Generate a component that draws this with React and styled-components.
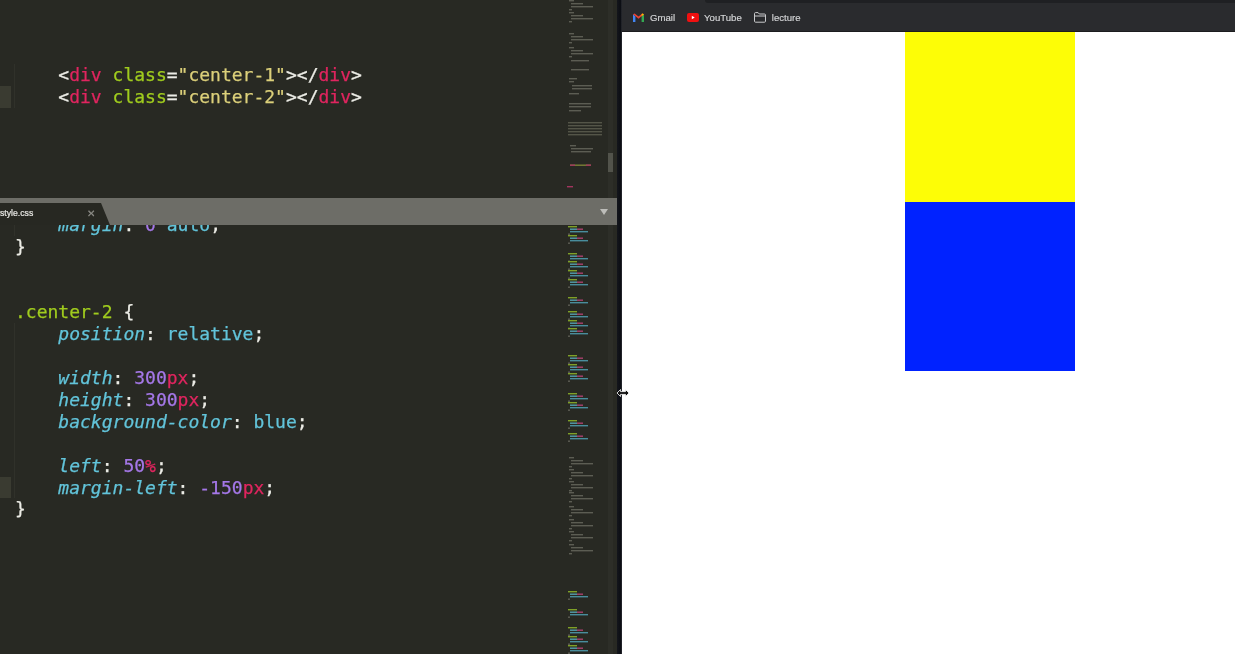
import styled, { createGlobalStyle } from "styled-components";

const GlobalStyle = createGlobalStyle`
  html, body {
    margin: 0;
    padding: 0;
    height: 100%;
    overflow: hidden;
    background: #272822;
  }
`;

const Screen = styled.div`
  position: relative;
  display: grid;
  grid-template-columns: 617px 5px 613px;
  width: 1235px;
  height: 654px;
  overflow: hidden;
  filter: blur(0.4px);
`;

const Editor = styled.div`
  display: flex;
  flex-direction: column;
  height: 654px;
  background: #282923;
`;

const Pane = styled.div`
  display: flex;
  height: ${(p) => p.$height}px;
  overflow: hidden;
`;

const Code = styled.div`
  flex: 1;
  min-width: 0;
  margin-top: ${(p) => p.$shift || 0}px;
  padding-top: ${(p) => p.$top || 0}px;
  font-family: "DejaVu Sans Mono", monospace;
  font-size: 18px;
  color: #ecece6;
  -webkit-text-stroke: 0.25px currentColor;
`;

const Line = styled.div`
  display: flex;
  height: 21.9px;
  line-height: 21.9px;
  white-space: pre;
`;

const Gutter = styled.div`
  width: 11px;
  margin-right: 3px;
  background: ${(p) => (p.$active ? "#3a3b31" : "transparent")};
`;

const LineText = styled.div`
  border-left: 1px solid ${(p) => (p.$guide ? "#30312a" : "transparent")};
`;

const Token = styled.span`
  color: ${(p) => p.$color};
  font-style: ${(p) => (p.$italic ? "italic" : "normal")};
`;

const MinimapSvg = styled.svg`
  flex: none;
  width: 43px;
  display: block;
  opacity: 0.85;
  filter: blur(0.5px);
`;

const ScrollTrack = styled.div`
  position: relative;
  flex: none;
  width: 5px;
  margin-right: 4px;
  background: #2d2e28;
`;

const ScrollThumb = styled.div`
  position: absolute;
  left: 0;
  right: 0;
  top: 153px;
  height: 19px;
  background: #52534b;
`;

const TabBar = styled.div`
  display: flex;
  align-items: flex-end;
  justify-content: space-between;
  height: 27px;
  background: #6d6d67;
`;

const Tab = styled.div`
  display: flex;
  align-items: center;
  justify-content: space-between;
  width: 110px;
  height: 22px;
  padding: 0 15px 2px 0;
  box-sizing: border-box;
  background: #272822;
  clip-path: polygon(0 0, 101px 0, 110px 100%, 0 100%);
  font-family: "Liberation Sans", Arial, sans-serif;
  font-size: 8.7px;
  font-weight: 400;
  color: #e8e8e4;
  -webkit-text-stroke: 0.2px currentColor;
`;

const TabClose = styled.span`
  font-size: 10px;
  color: #8d8d88;
`;

const TabArrow = styled.div`
  align-self: center;
  margin: 0 9px 0 0;
  width: 0;
  height: 0;
  border-left: 4px solid transparent;
  border-right: 4px solid transparent;
  border-top: 6px solid #bdbdb9;
`;

const Divider = styled.div`
  background: linear-gradient(90deg, #14161c 0%, #0c0e14 70%, #2b2d33 100%);
`;

const Browser = styled.div`
  display: flex;
  flex-direction: column;
  background: #fff;
`;

const BookmarkBar = styled.div`
  flex: none;
  height: 32px;
  box-sizing: border-box;
  background: #2a2b2e;
  border-bottom: 1px solid #1c1c1e;
`;

const AddressEdge = styled.div`
  height: 3px;
  margin-left: 83px;
  background: #1f2023;
  border-bottom-left-radius: 4px;
`;

const Bookmarks = styled.div`
  display: flex;
  align-items: center;
  height: 28px;
  padding-left: 11px;
`;

const Bookmark = styled.div`
  display: flex;
  align-items: center;
  gap: ${(p) => p.$gap}px;
  margin-right: ${(p) => p.$right}px;
  font-family: "Liberation Sans", Arial, sans-serif;
  font-size: 9.6px;
  color: #d5d6d8;
  -webkit-text-stroke: 0.15px currentColor;
`;

const Page = styled.div`
  flex: 1;
  padding-left: 283px;
`;

const DemoBox = styled.div`
  width: 170px;
  height: ${(p) => p.$height}px;
  background: ${(p) => p.$color};
`;

const ResizeCursor = styled.svg`
  position: absolute;
  left: 617px;
  top: 389px;
  width: 12px;
  height: 8px;
`;

const C = {
  white: "#ecece6",
  pink: "#e0255f",
  green: "#a0cc1e",
  yellow: "#dcd07a",
  teal: "#62c4da",
  purple: "#a578e8",
};

const t = (text, color = C.white, italic = false) => ({ text, color, italic });

const divLine = (n) => [
  t("    <"),
  t("div", C.pink),
  t(" "),
  t("class", C.green),
  t("="),
  t(`"center-${n}"`, C.yellow),
  t("></"),
  t("div", C.pink),
  t(">"),
];

const topLines = [
  { tokens: divLine(1), guide: true },
  { tokens: divLine(2), guide: true, active: true },
];

const prop = (name) => [t("    "), t(name, C.teal, true), t(": ")];

const bottomLines = [
  { tokens: [...prop("margin"), t("0", C.purple), t(" "), t("auto", C.teal), t(";")], guide: true },
  { tokens: [t("}")] },
  { tokens: [] },
  { tokens: [] },
  { tokens: [t(".center-2", C.green), t(" {")] },
  { tokens: [...prop("position"), t("relative", C.teal), t(";")], guide: true },
  { tokens: [], guide: true },
  { tokens: [...prop("width"), t("300", C.purple), t("px", C.pink), t(";")], guide: true },
  { tokens: [...prop("height"), t("300", C.purple), t("px", C.pink), t(";")], guide: true },
  { tokens: [...prop("background-color"), t("blue", C.teal), t(";")], guide: true },
  { tokens: [], guide: true },
  { tokens: [...prop("left"), t("50", C.purple), t("%", C.pink), t(";")], guide: true },
  { tokens: [...prop("margin-left"), t("-150", C.purple), t("px", C.pink), t(";")], guide: true, active: true },
  { tokens: [t("}")] },
];

// minimap rows: [y, x, width, colour]
const dim = "#66675c";
const dimGroup = (y) => [
  [y, 4, 5, dim],
  [y + 3, 6, 12, dim],
  [y + 6, 6, 22, dim],
  [y + 9, 4, 3, dim],
];
const colourGroup = (y) => [
  [y, 3, 9, "#8fb52a"],
  [y + 2.5, 5, 7, "#5fb3c6"],
  [y + 2.5, 12, 6, "#c0457a"],
  [y + 5, 5, 18, "#4f9fb2"],
  [y + 7.5, 3, 2, dim],
];

const topMinimap = [
  ...[0, 12, 33, 47].flatMap(dimGroup),
  ...[60, 69].map((y) => [y, 6, 18, dim]),
  [78, 4, 8, dim],
  [81, 4, 5, dim],
  [85, 7, 20, dim],
  [88, 7, 20, dim],
  [93, 4, 10, dim],
  [103, 4, 22, dim],
  [106, 4, 22, dim],
  [110, 4, 12, dim],
  ...[122, 125, 128, 131, 134].map((y) => [y, 3, 34, "#5c5d4f"]),
  [145, 5, 6, dim],
  [148, 6, 22, dim],
  [151, 6, 20, dim],
  [164.5, 5, 21, "#8a8f3a"],
  [164.5, 5, 5, "#b8386a"],
  [164.5, 21, 5, "#b8386a"],
  [186, 2, 6, "#b8386a"],
];

const bottomMinimap = [
  ...[1, 10, 28, 36, 45, 54, 72, 86, 95, 103, 130, 139, 148, 168, 177, 195, 208].flatMap(colourGroup),
  ...[232, 244, 256, 267, 281, 294, 306, 319].flatMap(dimGroup),
  ...[366, 384, 402, 411, 420].flatMap(colourGroup),
];

function Minimap({ height, rows }) {
  return (
    <MinimapSvg viewBox={`0 0 43 ${height}`} height={height}>
      {rows.map(([y, x, w, color], i) => (
        <rect key={i} x={x} y={y} width={w} height="1.4" fill={color} />
      ))}
    </MinimapSvg>
  );
}

function CodeLines({ lines }) {
  return lines.map((line, i) => (
    <Line key={i}>
      <Gutter $active={line.active} />
      <LineText $guide={line.guide}>
        {line.tokens.map((tok, j) => (
          <Token key={j} $color={tok.color} $italic={tok.italic}>
            {tok.text}
          </Token>
        ))}
      </LineText>
    </Line>
  ));
}

function GmailIcon() {
  return (
    <svg width="11" height="9" viewBox="0 0 11 9">
      <path d="M0 1.2V9h2.4V3.6z" fill="#4285f4" />
      <path d="M11 1.2V9H8.6V3.6z" fill="#34a853" />
      <path d="M0 1.2 1.6.4 5.5 3.6 9.4.4 11 1.2 5.5 5.8z" fill="#ea4335" />
      <path d="M8.6 3.6 11 1.2 9.4.4 8.6 1z" fill="#fbbc04" />
    </svg>
  );
}

function YoutubeIcon() {
  return (
    <svg width="12" height="9" viewBox="0 0 12 9">
      <rect width="12" height="9" rx="2" fill="#f01010" />
      <path d="M4.8 2.8v3.4l2.9-1.7z" fill="#fff" />
    </svg>
  );
}

function FolderIcon() {
  return (
    <svg width="12" height="11" viewBox="0 0 12 11" fill="none" stroke="#c9cacc" strokeWidth="1">
      <path d="M.5 9.2V1.6c0-.6.4-1 1-1h2.6l1.2 1.4h5.2c.6 0 1 .4 1 1v6.2c0 .6-.4 1-1 1h-9c-.6 0-1-.4-1-1z" />
      <path d="M.5 4h11" />
    </svg>
  );
}

export default function App() {
  return (
    <>
      <GlobalStyle />
      <Screen>
        <Editor>
          <Pane $height={198}>
            <Code $top={64}>
              <CodeLines lines={topLines} />
            </Code>
            <Minimap height={198} rows={topMinimap} />
            <ScrollTrack>
              <ScrollThumb />
            </ScrollTrack>
          </Pane>
          <TabBar>
            <Tab>
              style.css
              <TabClose>✕</TabClose>
            </Tab>
            <TabArrow />
          </TabBar>
          <Pane $height={429}>
            <Code $shift={-11.2}>
              <CodeLines lines={bottomLines} />
            </Code>
            <Minimap height={429} rows={bottomMinimap} />
            <ScrollTrack />
          </Pane>
        </Editor>
        <Divider />
        <Browser>
          <BookmarkBar>
            <AddressEdge />
            <Bookmarks>
              <Bookmark $gap={6} $right={12}>
                <GmailIcon />
                Gmail
              </Bookmark>
              <Bookmark $gap={5} $right={12}>
                <YoutubeIcon />
                YouTube
              </Bookmark>
              <Bookmark $gap={6} $right={0}>
                <FolderIcon />
                lecture
              </Bookmark>
            </Bookmarks>
          </BookmarkBar>
          <Page>
            <DemoBox $height={170} $color="#fdfd06" />
            <DemoBox $height={169} $color="#0022ff" />
          </Page>
        </Browser>
        <ResizeCursor viewBox="0 0 12 8">
          <path d="M0 4 3.5.5V2.6h5V.5L12 4 8.5 7.5V5.4h-5v2.1z" fill="#111" stroke="#fff" strokeWidth=".8" />
        </ResizeCursor>
      </Screen>
    </>
  );
}
